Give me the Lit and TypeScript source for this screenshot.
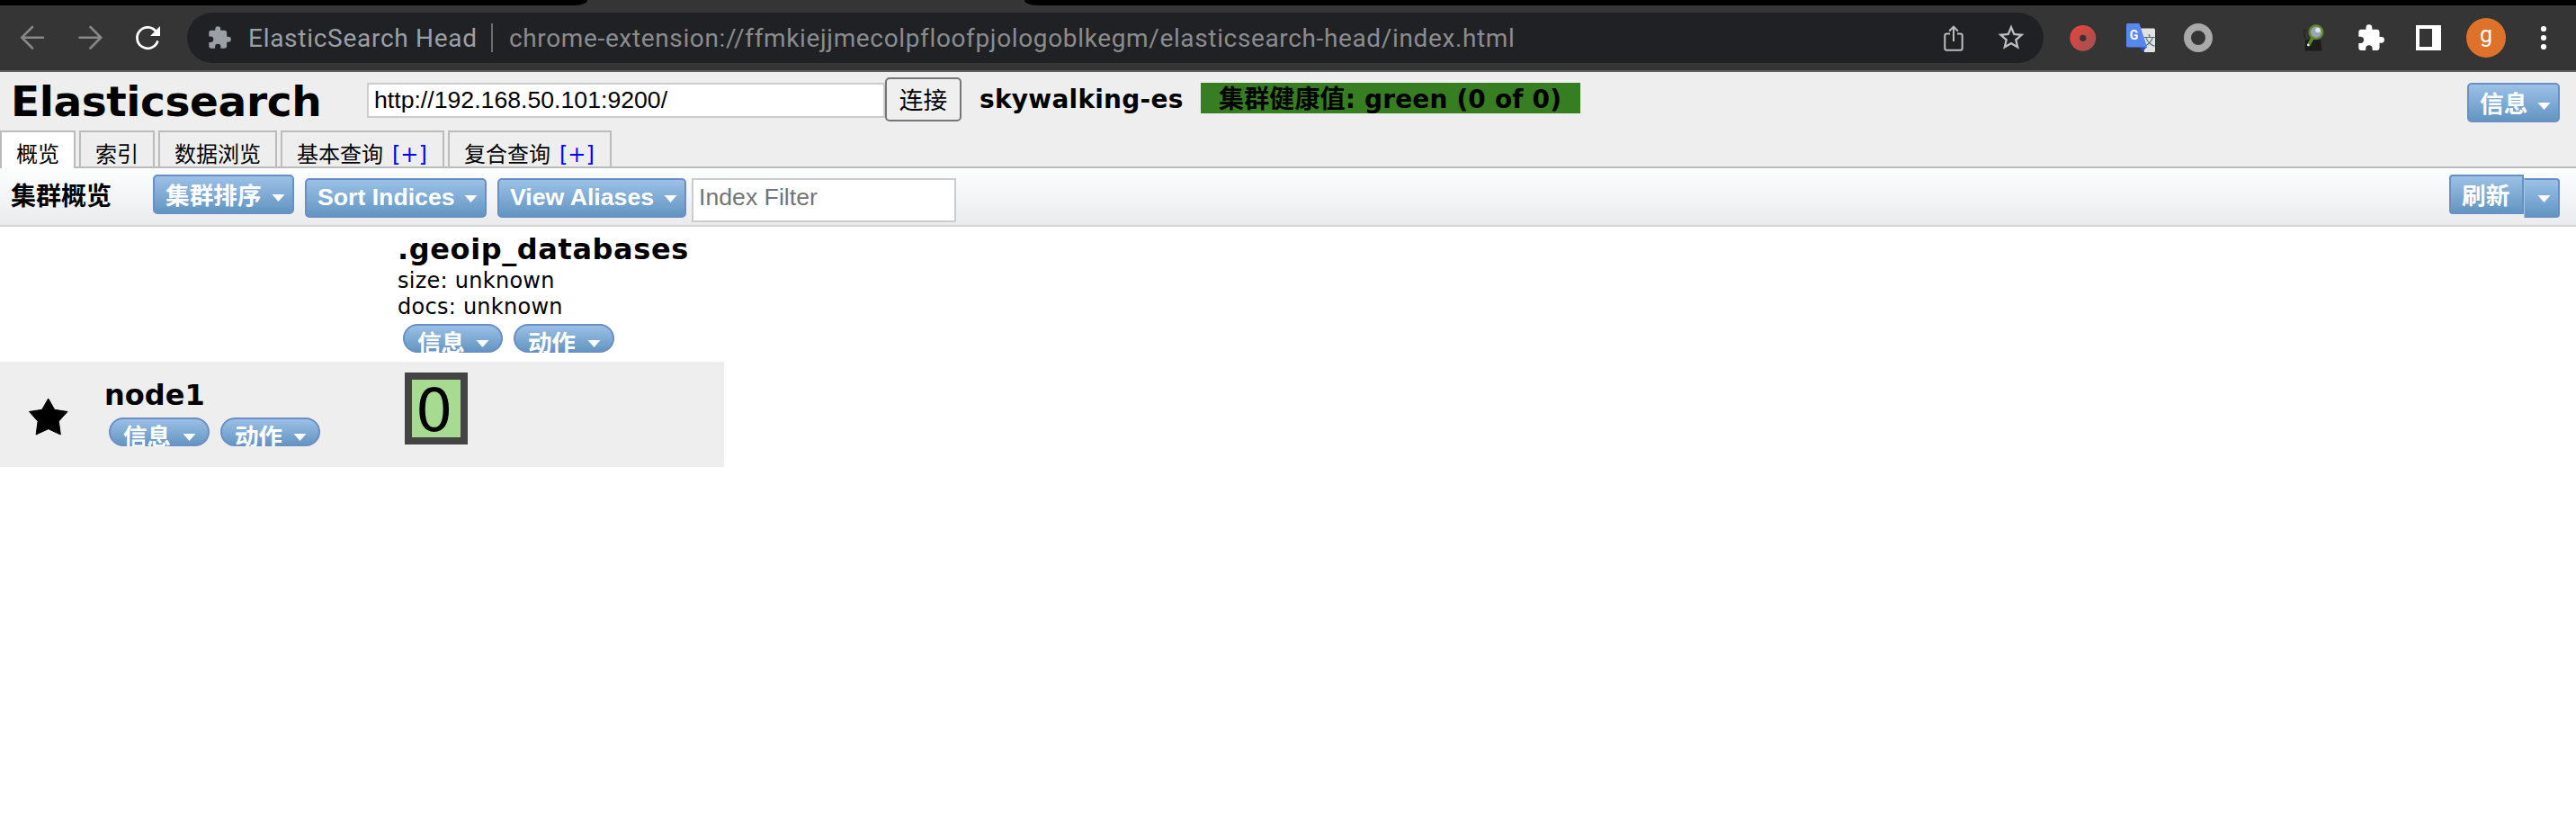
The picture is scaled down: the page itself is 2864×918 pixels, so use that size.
import { LitElement, html, css, svg, nothing } from "lit";
import { customElement, property } from "lit/decorators.js";

const PUZZLE = "M20.5 11H19V7c0-1.1-.9-2-2-2h-4V3.500a2.500 2.500 0 0 0-5 0V5H4c-1.100 0-2 .9-2 2v3.800h1.500a2.700 2.700 0 0 1 0 5.400H2V20c0 1.100.9 2 2 2h3.800v-1.500a2.700 2.700 0 0 1 5.400 0V22H17c1.100 0 2-.9 2-2v-4h1.500a2.500 2.500 0 0 0 0-5z";
const STAR = "M22 9.240l-7.190-.62L12 2 9.190 8.630 2 9.240l5.460 4.730L5.820 21 12 17.270 18.180 21l-1.630-7.030L22 9.240zM12 15.400l-3.760 2.270 1-4.280-3.320-2.880 4.380-.38L12 6.100l1.710 4.040 4.380.38-3.320 2.880 1 4.280L12 15.400z";

const cell = (content: unknown) => html`<svg width="64" height="64" viewBox="0 0 64 64">${content}</svg>`;

const share = svg`<path d="M28 27.500h-3.700q-2 0-2 2v14.300q0 2 2 2h15.400q2 0 2-2V29.500q0-2-2-2H36M32 36V20M27.200 24.500L32 19.700l4.800 4.800" fill="none" stroke="#bdbdbd" stroke-width="2"/>`;
const bookmark = svg`<path transform="translate(14.6 14.4) scale(1.45)" d=${STAR} fill="#bdbdbd"/>`;
const record = svg`<defs><linearGradient id="red" x1="0" y1="0" x2="1" y2="1"><stop offset=".2" stop-color="#db483e"/><stop offset="1" stop-color="#9c5058"/></linearGradient></defs><circle cx="31.800" cy="32.300" r="14.400" fill="url(#red)"/><circle cx="31.800" cy="32.300" r="3.600" fill="#353535"/>`;
const translate = svg`<path d="M32 21.500h14.500q1.500 0 1.500 1.500v23.500q0 1.500-1.500 1.500H36z" fill="#e2e2e2"/><text x="34.500" y="40" font-size="14" font-family="Noto Sans CJK SC, sans-serif" fill="#527078">文</text>
  <path d="M31 42h8.200L34 47.500z" fill="#3146b8"/><path d="M17.500 16h13L39.200 42.500H17.500q-1.500 0-1.500-1.500V17.500q0-1.500 1.500-1.500z" fill="#5688ee"/><text x="19.800" y="34" font-size="14" font-weight="bold" font-family="Roboto, sans-serif" fill="#fff">G</text>`;
const ring = svg`<circle cx="32" cy="32" r="12" fill="none" stroke="#a9a9a9" stroke-width="8"/>`;
const lens = svg`<path d="M23 34h17l1.500 12.500h-19z" fill="#1c1c1c"/><path d="M24 23.500h-2v7l1 2" fill="none" stroke="#252525" stroke-width="1.500"/><path d="M31 32.500L27 39.500" stroke="#55842a" stroke-width="3.600" stroke-linecap="round"/><circle cx="26.300" cy="40" r="1.300" fill="#eee"/><circle cx="35" cy="25.700" r="7.300" fill="#9ba4b2" stroke="#5f8a2c" stroke-width="2.400"/><circle cx="37" cy="23.500" r="2.800" fill="#dfe4ea"/>`;
const puzzle = svg`<path transform="translate(15.6 15.9) scale(1.365)" d=${PUZZLE} fill="#fff"/>`;
const panel = svg`<path d="M18 18h28v28H18zM22 22v20h14V22z" fill="#fff" fill-rule="evenodd"/>`;
const dots = svg`<g fill="#fff"><circle cx="32" cy="22" r="3.100"/><circle cx="32" cy="32" r="3.100"/><circle cx="32" cy="42" r="3.100"/></g>`;

@customElement("menu-button")
class MenuButton extends LitElement {
  @property() label = "";
  @property({ reflect: true }) kind = "square";
  @property({ type: Boolean }) arrow = false;
  static styles = css`
    :host { display: block; flex: none; box-sizing: border-box; height: 44px; border: 2px solid #6a8ec6; border-radius: 5px;
      background: linear-gradient(#9fc3e8, #6093c0) border-box; color: #fff; clip-path: inset(0);
      font: bold 26.67px/44px "Liberation Sans", "Noto Sans CJK SC", sans-serif; }
    :host([kind="low"]) { line-height: 38px; }
    :host([kind="pill"]) { height: 32px; border-radius: 16px; line-height: 40px; }
    .row { display: flex; height: 40px; white-space: nowrap; }
    .label { padding-left: 12px; }
    .tri { margin: 20px 8px 0 auto; width: 15px; height: 8px; flex: none; }
    :host([kind="low"]) .tri { margin-top: 17px; }
    :host([kind="pill"]) .tri { margin: 16px 13px 0 auto; }
    :host([kind="pill"]) .label { padding-left: 14px; letter-spacing: -0.3px; }
  `;
  render() {
    return html`<div class="row"><span class="label">${this.label}</span>
      ${this.arrow ? html`<svg class="tri" viewBox="0 0 15 8"><path d="M0.500 0h14L7.500 8z" fill="#fff"/></svg>` : nothing}</div>`;
  }
}

@customElement("app-root")
class AppRoot extends LitElement {
  static styles = css`
    :host { display: block; width: 2864px; height: 918px; background: #fff; color: #000; overflow: hidden;
      font-family: "DejaVu Sans", "Noto Sans CJK SC", sans-serif; white-space: nowrap; }
    svg { display: block; flex: none; }
    .strip { height: 6px; background: #353535; display: flex; justify-content: space-between; }
    .strip i { background: #000; }
    .s1 { width: 653px; border-bottom-right-radius: 14px 6px; }
    .s2 { width: 1725px; border-bottom-left-radius: 14px 6px; }
    .chrome { height: 74px; box-sizing: border-box; background: #353535; border-bottom: 2px solid #5e5e5e; display: flex; align-items: center;
      font-family: Roboto, sans-serif; font-size: 28px; }
    .omni { flex: none; width: 2064px; height: 56px; border-radius: 28px; background: #202124; display: flex; align-items: center; margin: 0 12px 0 28px; color: #9aa0a6; }
    .ext { margin-left: 22px; }
    .name { margin-left: 18px; width: 270px; letter-spacing: 0.72px; }
    .sep { width: 2px; height: 32px; background: #6b6e71; }
    .url { margin: 0 auto 0 18px; color: #8b8c8e; letter-spacing: 0.64px; }
    .end { display: flex; margin-right: 4px; }
    .gap { width: 64px; }
    .avatar { width: 44px; height: 44px; border-radius: 50%; background: #df722a; color: #fff; font-size: 25px; line-height: 38px; text-align: center; margin: 0 10px; }
    .head { height: 105px; background: #eee; border-bottom: 2px solid #bbb; display: grid; grid-template-rows: 65px 42px; }
    .top { display: flex; align-items: flex-start; }
    h1 { margin: 0 0 0 12px; width: 396px; font-size: 47px; line-height: 65px; font-weight: bold; letter-spacing: -0.4px; }
    .addr { box-sizing: border-box; margin-top: 12px; width: 576px; height: 39px; background: #fff; border: 2px solid #ccc; padding-left: 6px; font: 26.67px/34px "Liberation Sans", sans-serif; }
    .connect { box-sizing: border-box; margin-top: 6px; width: 85px; height: 49px; border: 2px solid #767676; border-radius: 5px; background: #efefef; text-align: center; font: 26.67px/44px "Noto Sans CJK SC", sans-serif; }
    .cluster { margin: 12px 0 0 20px; width: 246px; font-size: 28px; line-height: 37px; font-weight: bold; letter-spacing: 0.25px; }
    .health { margin-top: 12px; box-sizing: border-box; width: 422px; height: 34px; padding-left: 20px; background: #377d22; font-weight: bold; font-size: 28px; line-height: 37px; letter-spacing: 0.15px; }
    .top menu-button { margin: 12px 18px 0 auto; width: 103px; }
    .tabs { display: flex; gap: 4px; }
    .tab { box-sizing: border-box; height: 40px; border: 2px solid #bbb; border-bottom: 0; padding-left: 16px; font-size: 24px; line-height: 50px; overflow: hidden; }
    .tab.on { height: 42px; background: #fff; }
    .tab b { font-weight: normal; color: #00f; margin-left: 10px; }
    .bar { height: 63px; border-bottom: 2px solid #d3d3d3; background: linear-gradient(#fdfefe, #e9ebed); display: flex; align-items: flex-start; }
    .bar h2 { margin: 0 0 0 12px; width: 158px; font-size: 28px; line-height: 64px; }
    .up { margin-top: 7px; }
    .dn { margin-top: 11px; }
    .filter { box-sizing: border-box; margin: 11px auto 0 6px; width: 294px; height: 49px; background: #fff; border: 2px solid #ccc; padding-left: 6px; color: #757575; font: 26.67px/38px "Liberation Sans", sans-serif; }
    .b1 { width: 157px; }
    .b2 { width: 202px; margin-left: 12px; }
    .b3 { width: 210px; margin-left: 12px; }
    .b4 { width: 83px; border-radius: 4px 0 0 4px; }
    .b5 { width: 40px; margin-right: 18px; border-radius: 0 4px 4px 0; border-left: 1px solid #a5c5e5; }
    .index { margin-left: 442px; height: 150px; }
    .title { font-size: 32px; font-weight: bold; line-height: 51px; height: 46px; letter-spacing: 0.6px; }
    .meta { font-size: 24px; line-height: 29px; letter-spacing: 0.26px; }
    .pills { display: flex; gap: 12px; }
    .pills menu-button { width: 112px; }
    .index .pills { margin: 4px 0 0 6px; }
    .index .pills menu-button:first-child, .who .pills menu-button:last-child { width: 111px; }
    .node { width: 805px; height: 117px; background: #eee; display: flex; align-items: flex-start; }
    .star { margin: 40px 0 0 32px; }
    .who { margin-left: 40px; width: 334px; }
    .who .title { height: 62px; line-height: 75px; letter-spacing: 0; }
    .who .pills { margin-left: 5px; }
    .shard { box-sizing: border-box; margin-top: 12px; width: 70px; height: 80px; border: 8px solid #444; background: #a7db91; font-size: 65px; line-height: 69px; padding-left: 4px; }
  `;
  private tabs: [string, number, boolean][] = [["概览", 84, false], ["索引", 84, false], ["数据浏览", 132, false], ["基本查询", 182, true], ["复合查询", 182, true]];
  private pills() {
    return html`<div class="pills"><menu-button kind="pill" label="信息" arrow></menu-button><menu-button kind="pill" label="动作" arrow></menu-button></div>`;
  }
  render() {
    return html`
      <div class="strip"><i class="s1"></i><i class="s2"></i></div>
      <div class="chrome">
        <svg width="180" height="40" viewBox="0 0 180 40" fill="none" stroke-width="2.600" stroke-linecap="round"><path stroke="#888" d="M48 19.700H24.500M36 8L24.300 19.700L36 31.500M88.500 19.700h23.500M100.500 8l11.700 11.700L100.500 31.500"/><path d="M173.500 13A11.700 11.700 0 1 0 175 24.500" stroke="#fff" stroke-width="2.800"/><path d="M178 7v11h-11z" fill="#fff"/></svg>
        <div class="omni">
          <svg class="ext" width="28" height="28" viewBox="0 0 24 24"><path fill="#9aa0a6" d=${PUZZLE}/></svg>
          <span class="name">ElasticSearch Head</span><span class="sep"></span>
          <span class="url">chrome-extension://ffmkiejjmecolpfloofpjologoblkegm/elasticsearch-head/index.html</span>
          <div class="end">${cell(share)}${cell(bookmark)}</div>
        </div>
        ${cell(record)}${cell(translate)}${cell(ring)}<span class="gap"></span>${cell(lens)}${cell(puzzle)}${cell(panel)}<div class="avatar">g</div>${cell(dots)}
      </div>
      <div class="head">
        <div class="top"><h1>Elasticsearch</h1><div class="addr">http://192.168.50.101:9200/</div><div class="connect">连接</div>
          <div class="cluster">skywalking-es</div><div class="health">集群健康值: green (0 of 0)</div><menu-button label="信息" arrow></menu-button></div>
        <div class="tabs">${this.tabs.map(([text, width, plus], i) => html`<div class="tab ${i ? "" : "on"}" style="width:${width}px">${text}${plus ? html`<b>[+]</b>` : nothing}</div>`)}</div>
      </div>
      <div class="bar"><h2>集群概览</h2><menu-button class="up b1" label="集群排序" arrow></menu-button><menu-button kind="low" class="dn b2" label="Sort Indices" arrow></menu-button><menu-button kind="low" class="dn b3" label="View Aliases" arrow></menu-button><div class="filter">Index Filter</div>
        <menu-button class="up b4" label="刷新"></menu-button><menu-button kind="low" class="dn b5" arrow></menu-button></div>
      <div class="index"><div class="title">.geoip_databases</div><div class="meta">size: unknown<br>docs: unknown</div>${this.pills()}</div>
      <div class="node"><svg class="star" width="44" height="43" viewBox="0 0 44 43"><path d="M21.700 1L28.700 13.300L43 15.500L33.300 26.200L35.300 41L21.700 34.700L8.100 41L10.100 26.200L0.500 15.500L14.700 13.300z" stroke="#000" stroke-linejoin="round"/></svg>
        <div class="who"><div class="title">node1</div>${this.pills()}</div><div class="shard">0</div></div>`;
  }
}
